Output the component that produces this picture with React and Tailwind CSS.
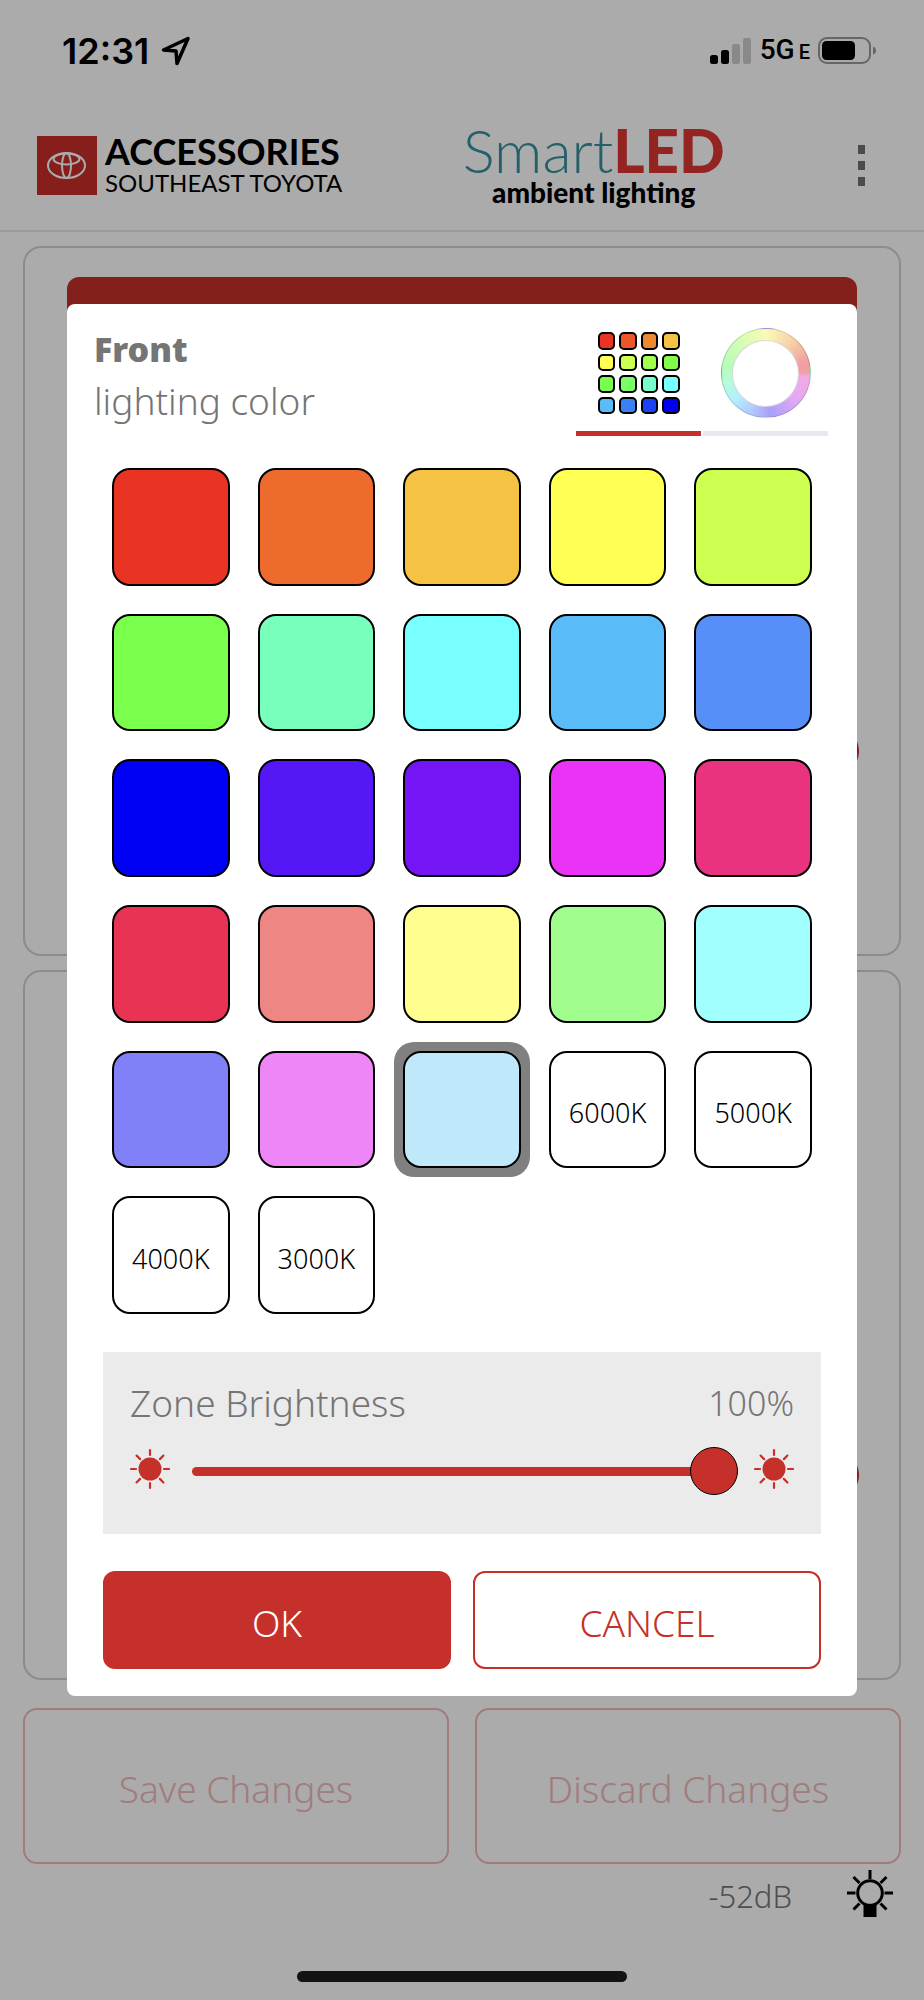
import { useState } from 'react'

const SWATCHES = [
  '#e93323', '#ec6b2d', '#f5c244', '#ffff54', '#ccff50',
  '#79ff4c', '#78ffbc', '#78ffff', '#59bcf9', '#568ff8',
  '#0000f5', '#5617f6', '#7514f5', '#ea33f7', '#ea337f',
  '#e93354', '#ee8683', '#fffe8f', '#a1fd8e', '#a1fffe',
  '#8080f7', '#ee86f8', '#bfe8fb',
]

const WHITES = ['6000K', '5000K', '4000K', '3000K']

const PALETTE = [
  '#e93323', '#eb5529', '#ee8833', '#f5c244',
  '#ffff54', '#ccff50', '#a3ff4e', '#82ff4c',
  '#79ff4c', '#7aff66', '#78ffcb', '#78ffff',
  '#59bcf9', '#3b80f7', '#1c42f5', '#0000f5',
]

const RAYS = [0, 45, 90, 135, 180, 225, 270, 315]

function StatusBar() {
  return (
    <div className="flex h-[100px] items-center justify-between pl-[62px] pr-[47px] pt-[2px] font-['Inter',sans-serif] text-black">
      <div className="flex items-center gap-3">
        <span className="text-[36px] font-semibold leading-[40px]">12:31</span>
        <svg width="30" height="30" viewBox="0 0 30 30" fill="none" stroke="currentColor" strokeWidth="3.5" strokeLinejoin="round">
          <path d="M2.5 14 27 2.5 16 27.5 15 15Z" />
        </svg>
      </div>
      <div className="flex items-center gap-2">
        <svg width="42" height="28" viewBox="0 0 42 28">
          <rect x="0" y="18" width="8" height="9" rx="2.5" />
          <rect x="11" y="13" width="8" height="14" rx="2.5" />
          <rect x="22" y="7" width="8" height="20" rx="2.5" fill="#cdcdcd" />
          <rect x="33" y="1" width="8" height="26" rx="2.5" fill="#cdcdcd" />
        </svg>
        <span className="flex items-baseline gap-1 font-['Roboto',sans-serif] font-medium">
          <span className="text-[28px] leading-[34px]">5G</span>
          <span className="text-[20px] leading-[34px]">E</span>
        </span>
        <svg width="59" height="28" viewBox="0 0 59 28">
          <rect x="1" y="1" width="51" height="25" rx="8" fill="none" stroke="#999" strokeWidth="2" />
          <rect x="4" y="4" width="33" height="19" rx="4.5" />
          <path d="M55 9.5q3 1 3 4t-3 4Z" fill="#999" />
        </svg>
      </div>
    </div>
  )
}

function ToyotaMark() {
  return (
    <svg width="60" height="59" viewBox="0 0 60 59" role="img" aria-label="Toyota">
      <rect width="60" height="59" fill="#c82e2b" />
      <g fill="none" stroke="#fff" strokeWidth="2">
        <ellipse cx="29.5" cy="29.5" rx="18.5" ry="12.5" />
        <ellipse cx="29.5" cy="29.5" rx="4.5" ry="12.5" />
        <ellipse cx="29.5" cy="23" rx="13" ry="5.5" />
      </g>
    </svg>
  )
}

function Header() {
  return (
    <header className="flex h-[132px] items-center justify-between border-b-2 border-[#e9e9e9] pl-[37px] pr-[47px] font-['Lato',sans-serif]">
      <div className="flex items-center gap-2">
        <ToyotaMark />
        <div className="text-black">
          <p className="text-[36px] font-bold leading-[36px]">ACCESSORIES</p>
          <p className="text-[24px] leading-[28px]">SOUTHEAST TOYOTA</p>
        </div>
      </div>
      <div className="text-center">
        <p className="text-[60px] leading-[54px] text-[#378f9e]">
          <span className="font-light">Smart</span>
          <span className="font-black text-[#db3633]">LED</span>
        </p>
        <p className="text-[28px] font-black leading-[30px] text-black">ambient lighting</p>
      </div>
      <button type="button" aria-label="Menu" className="flex w-8 flex-col items-center gap-[7px] py-2">
        <span className="h-[9px] w-[7px] bg-[#717171]" />
        <span className="h-[9px] w-[7px] bg-[#717171]" />
        <span className="h-[9px] w-[7px] bg-[#717171]" />
      </button>
    </header>
  )
}

function Slider({ label, value, onChange, outlined }) {
  return (
    <input
      type="range"
      min="0"
      max="100"
      aria-label={label}
      value={value}
      onChange={(event) => onChange(Number(event.target.value))}
      className={`block h-12 w-full appearance-none bg-transparent [&::-webkit-slider-runnable-track]:h-[9px] [&::-webkit-slider-runnable-track]:rounded-full [&::-webkit-slider-runnable-track]:bg-[#c5302a] [&::-webkit-slider-thumb]:-mt-5 [&::-webkit-slider-thumb]:size-12 [&::-webkit-slider-thumb]:appearance-none [&::-webkit-slider-thumb]:rounded-full [&::-webkit-slider-thumb]:bg-[#c5302a] ${
        outlined ? '[&::-webkit-slider-thumb]:border [&::-webkit-slider-thumb]:border-black' : ''
      }`}
    />
  )
}

function ZoneCard({ name }) {
  const [level, setLevel] = useState(100)

  return (
    <section className="h-[710px] rounded-[18px] border-2 border-[#d1d1d1] px-[42px] pt-[29px]">
      {name === 'Front' ? (
        <div className="h-20 rounded-t-xl bg-[#c5302a]" />
      ) : (
        <div className="h-20" />
      )}
      <div className="-mr-[2px] mt-[370px]">
        <Slider label={`${name} brightness`} value={level} onChange={setLevel} />
      </div>
    </section>
  )
}

function Bulb() {
  return (
    <svg width="48" height="48" viewBox="0 0 48 48" fill="none" stroke="#000" strokeWidth="3">
      <circle cx="24" cy="23" r="12.3" />
      <path d="M24 0v9M1 23h8.5M38.5 23H47M7.5 7l6 6M40.5 7l-6 6M7.5 39.5l6-6M40.5 39.5l-6-6" />
      <path d="M17.5 34h13v13h-13z" fill="#000" stroke="none" />
    </svg>
  )
}

function Sun() {
  return (
    <svg width="40" height="42" viewBox="0 0 40 42" className="shrink-0">
      <circle cx="20" cy="21" r="11.5" fill="#c5302a" />
      {RAYS.map((angle) => (
        <path
          key={angle}
          d="M20 2v5"
          stroke="#c5302a"
          strokeWidth="2.2"
          strokeLinecap="round"
          transform={`rotate(${angle} 20 21)`}
        />
      ))}
    </svg>
  )
}

function PaletteIcon() {
  return (
    <span className="grid size-[82px] grid-cols-4 gap-1">
      {PALETTE.map((color) => (
        <span key={color} className="rounded-[5px] border-2 border-black" style={{ backgroundColor: color }} />
      ))}
    </span>
  )
}

function WheelIcon() {
  return (
    <span className="flex size-[90px] items-center justify-center rounded-full border border-black/15 bg-[conic-gradient(#fafab4,#f7d0a8_40deg,#f0a0a0_75deg,#f0a0a8_90deg,#f2aae4_95deg,#e6a8f5_130deg,#a8a0fa_175deg,#b4c8fc_200deg,#b4f0ff_230deg,#b4fcdc_255deg,#b8fcb8_280deg,#d4fdb4_320deg,#fafab4)]">
      <span className="size-[67px] rounded-full border border-black/15 bg-white" />
    </span>
  )
}

function Tab({ label, active, onClick, children }) {
  return (
    <button
      type="button"
      role="tab"
      aria-label={label}
      aria-selected={active}
      onClick={onClick}
      className={`flex h-[108px] w-[125px] items-center justify-center border-b-[5px] pb-[13px] ${
        active ? 'border-[#c5302a]' : 'border-[#e9e8f0]'
      }`}
    >
      {children}
    </button>
  )
}

function Swatch({ color, label, selected, onClick }) {
  return (
    <li className="relative aspect-square">
      {selected && <span className="absolute -inset-[9px] rounded-[20px] bg-[#808080]" />}
      <button
        type="button"
        aria-label={label ?? color}
        aria-pressed={selected}
        onClick={onClick}
        style={{ backgroundColor: color }}
        className="relative block size-full rounded-[18px] border-2 border-black pt-2 text-[27px] font-light text-black"
      >
        {label}
      </button>
    </li>
  )
}

function ColorDialog() {
  const [tab, setTab] = useState('palette')
  const [selected, setSelected] = useState('#bfe8fb')
  const [brightness, setBrightness] = useState(100)

  return (
    <div role="dialog" aria-label="Front lighting color" className="w-full rounded-lg bg-white pb-[27px] pt-5">
      <div className="flex justify-between pl-[27px] pr-[29px]">
        <h2 className="leading-[51px] text-[#757575]">
          <span className="block text-[34px] font-black">Front</span>
          <span className="block text-[37px] font-light">lighting color</span>
        </h2>
        <div role="tablist" className="flex gap-[2px] pt-1">
          <Tab label="Palette" active={tab === 'palette'} onClick={() => setTab('palette')}>
            <PaletteIcon />
          </Tab>
          <Tab label="Color wheel" active={tab === 'wheel'} onClick={() => setTab('wheel')}>
            <WheelIcon />
          </Tab>
        </div>
      </div>

      <ul className="mt-8 grid grid-cols-5 gap-7 px-[45px]">
        {SWATCHES.map((color) => (
          <Swatch key={color} color={color} selected={selected === color} onClick={() => setSelected(color)} />
        ))}
        {WHITES.map((kelvin) => (
          <Swatch
            key={kelvin}
            color="#ffffff"
            label={kelvin}
            selected={selected === kelvin}
            onClick={() => setSelected(kelvin)}
          />
        ))}
      </ul>

      <div className="mx-9 mt-[38px] bg-[#ebebeb] px-[27px] pb-[38px] pt-[26px]">
        <div className="flex justify-between font-light leading-[50px] text-[#757575]">
          <span className="text-[37px]">Zone Brightness</span>
          <span className="text-[34px]">{brightness}%</span>
        </div>
        <div className="mt-5 flex items-start">
          <Sun />
          <div className="ml-[22px] mr-4 flex-1">
            <Slider label="Zone Brightness" value={brightness} onChange={setBrightness} outlined />
          </div>
          <Sun />
        </div>
      </div>

      <div className="mx-9 mt-[37px] grid grid-cols-2 gap-[22px] text-[37px] font-light">
        <button type="button" className="h-[98px] rounded-xl bg-[#c5302a] pt-[6px] text-white">
          OK
        </button>
        <button type="button" className="h-[98px] rounded-xl border-2 border-[#c5302a] pt-[6px] text-[#c5302a]">
          CANCEL
        </button>
      </div>
    </div>
  )
}

export default function App() {
  return (
    <div className="relative flex min-h-screen flex-col bg-white font-['Noto_Sans',sans-serif]">
      <StatusBar />
      <Header />

      <main className="space-y-[14px] px-[23px] pt-[14px]">
        <ZoneCard name="Front" />
        <ZoneCard name="Rear" />
      </main>

      <div className="mt-7 grid grid-cols-2 gap-[26px] px-[23px] text-[37px] font-light text-[#f0b9b9]">
        <button type="button" className="h-[156px] rounded-[14px] border-2 border-[#f0b9b9] pt-[6px]">
          Save Changes
        </button>
        <button type="button" className="h-[156px] rounded-[14px] border-2 border-[#f0b9b9] pt-[6px]">
          Discard Changes
        </button>
      </div>

      <footer className="flex items-center justify-end gap-[54px] px-[30px] pt-1">
        <span className="pt-1 text-[31px] font-light leading-[48px] text-[#757575]">-52dB</span>
        <Bulb />
      </footer>

      <div className="absolute inset-0 flex items-center justify-center bg-black/33 px-[67px]">
        <ColorDialog />
      </div>
      <div className="absolute inset-x-0 bottom-[18px] flex justify-center">
        <span className="h-[11px] w-[330px] rounded-full bg-[#131313]" />
      </div>
    </div>
  )
}
